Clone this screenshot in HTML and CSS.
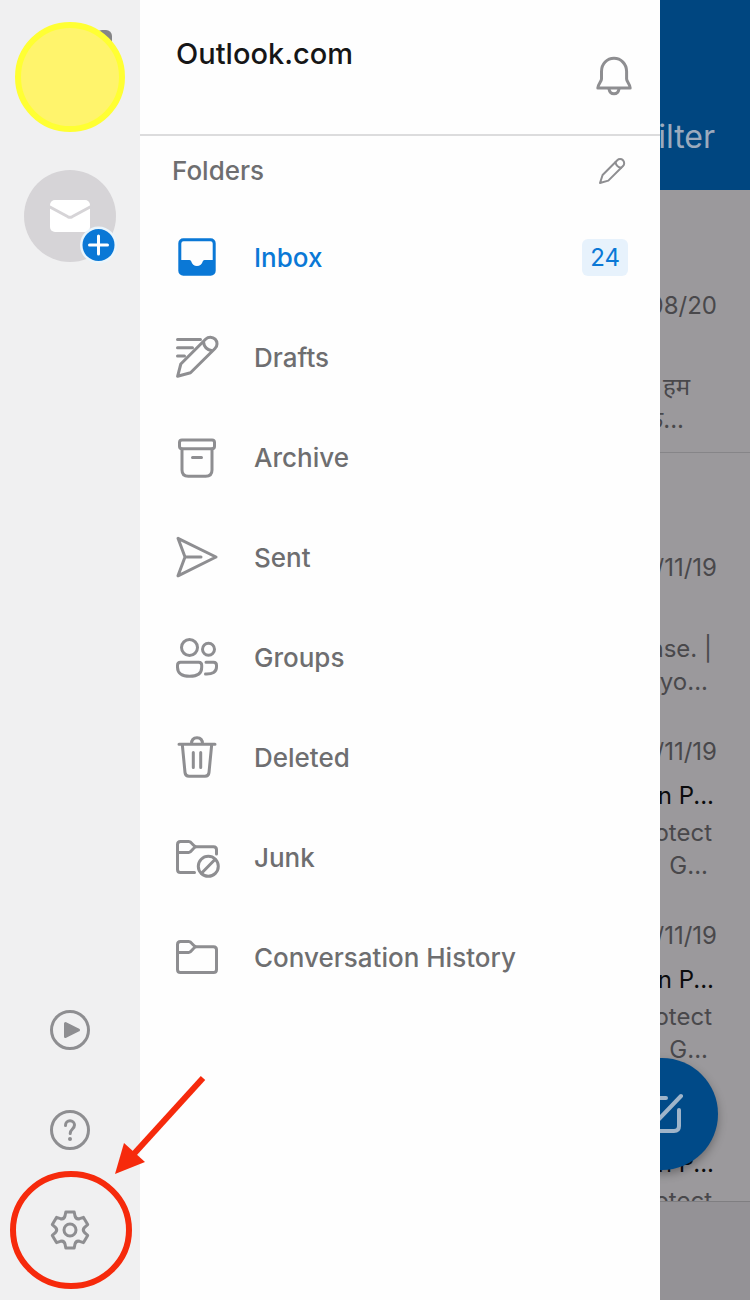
FILE: index.html
```html
<!DOCTYPE html>
<html lang="en">
<head>
    <meta charset="UTF-8">
    <meta name="viewport" content="width=device-width, initial-scale=1.0">
    <title>Outlook</title>
    <link rel="stylesheet" href="styles.css">
</head>
<body>

    <div class="app">
        <!-- Accounts rail -->
        <div class="rail">
            <button class="account" aria-label="Account">
                <span class="account-badge"></span>
                <span class="account-photo"></span>
            </button>
            <button class="add-account" aria-label="Add account">
                <svg width="92" height="92" viewBox="0 0 92 92">
                    <circle cx="46" cy="46" r="46" fill="#d6d4d7"/>
                    <rect x="26" y="30" width="40" height="32" rx="5" fill="#fff"/>
                    <path d="M25 36.5L44 46.8q2 1 4 0L67 36.5" fill="none" stroke="#d6d4d7" stroke-width="3"/>
                    <circle cx="74.5" cy="75" r="18.5" fill="#eaf5fc"/>
                    <circle cx="74.5" cy="75" r="16" fill="#0a78d6"/>
                    <path d="M74.5 66v18M65.5 75h18" stroke="#fff" stroke-width="3" stroke-linecap="round"/>
                </svg>
            </button>

            <div class="rail-tools">
                <button aria-label="Play my emails">
                    <svg width="40" height="40" viewBox="0 0 40 40">
                        <circle cx="20" cy="20" r="18.5"/>
                        <path d="M15.5 13.5L28.5 20l-13 6.5z" fill="#8e8e91"/>
                    </svg>
                </button>
                <button aria-label="Help">
                    <svg width="40" height="40" viewBox="0 0 40 40">
                        <circle cx="20" cy="20" r="18.5"/>
                        <path d="M15.5 15.5c0-3 2-4.700 4.500-4.700s4.500 1.800 4.500 4.300c0 3.900-4.300 4-4.300 8.400"/>
                        <circle cx="20" cy="29" r="2" fill="#8e8e91" stroke="none"/>
                    </svg>
                </button>
                <button aria-label="Settings">
                    <svg width="40" height="40" viewBox="0 0 40 40">
                        <path d="M15.8 2h8.4l.8 4Q26 9.6 29.6 8.7L33.5 7.4 37.7 14.6 34.6 17.3Q32 20 34.6 22.7L37.7 25.4 33.5 32.6 29.6 31.3Q26 30.4 25 34L24.2 38H15.8L15 34Q14 30.4 10.4 31.3L6.5 32.6 2.3 25.4 5.4 22.7Q8 20 5.4 17.3L2.3 14.6 6.5 7.4 10.4 8.7Q14 9.6 15 6z"/>
                        <circle cx="20" cy="20" r="6"/>
                    </svg>
                </button>
            </div>
        </div>

        <!-- Folder drawer -->
        <div class="drawer">
            <div class="drawer-header">
                <h1>Outlook.com</h1>
                <button aria-label="Notifications">
                    <svg width="40" height="40" viewBox="0 0 40 40">
                        <path d="M7.5 15.5C7.5 8 13 2.3 20 2.3S32.600 8 32.600 15.5V23c0 2.500 3.600 5.500 3.600 9H3.800c0-3.500 3.700-6.500 3.700-9z"/>
                        <path d="M15 33c.5 3 2.400 4.800 5 4.800s4.500-1.800 5-4.800"/>
                    </svg>
                </button>
            </div>

            <div class="folders-heading">
                <h2>Folders</h2>
                <button aria-label="Edit folders">
                    <svg width="28" height="28" viewBox="0 0 28 28">
                        <path d="M2 26L4.6 18 19.3 3.3a4 4 0 0 1 5.700 5.700L10.300 23.600z"/>
                        <path d="M17.500 5.200C18 8.500 20 10.300 23 10.800"/>
                    </svg>
                </button>
            </div>

            <nav>
                <a class="folder active" href="#inbox">
                    <svg width="46" height="46" viewBox="0 0 46 46">
                        <path d="M9.3 4.300h27.400a5 5 0 0 1 5 5v27.400a5 5 0 0 1-5 5H9.300a5 5 0 0 1-5-5V9.300a5 5 0 0 1 5-5zM9.500 7.300Q7.300 7.300 7.300 9.500V26H15.500q1.500 0 1.800 1.500c.6 2.700 2.800 4.500 5.700 4.500s5.100-1.800 5.700-4.500q.3-1.500 1.800-1.500h8.200V9.500q0-2.200-2.200-2.200z" fill="#0a78d6" fill-rule="evenodd" stroke="none"/>
                    </svg>
                    <span class="name">Inbox</span>
                    <span class="count">24</span>
                </a>
                <a class="folder" href="#drafts">
                    <svg width="46" height="46" viewBox="0 0 46 46">
                        <path d="M3.500 5.500h23M3.500 13.800h15M3.500 22h7"/>
                        <path d="M3.600 42.300L6.800 30 31.800 5a6.500 6.500 0 0 1 9.200 9.500L16.500 38.800zM29.500 8c.5 4.700 3.500 7.800 8.500 8.800"/>
                    </svg>
                    <span class="name">Drafts</span>
                </a>
                <a class="folder" href="#archive">
                    <svg width="46" height="46" viewBox="0 0 46 46">
                        <rect x="5.500" y="6" width="35" height="8.700" rx="2.500"/>
                        <path d="M8 15v21q0 6.300 6.300 6.300h17.400q6.300 0 6.300-6.300V15M18.500 23.500h9"/>
                    </svg>
                    <span class="name">Archive</span>
                </a>
                <a class="folder" href="#sent">
                    <svg width="46" height="46" viewBox="0 0 46 46">
                        <path d="M4 4.300L42 23 4 41.800 11 23zM11 23h16"/>
                    </svg>
                    <span class="name">Sent</span>
                </a>
                <a class="folder" href="#groups">
                    <svg width="46" height="46" viewBox="0 0 46 46">
                        <circle cx="15.500" cy="13.500" r="8"/>
                        <circle cx="34.500" cy="15.300" r="6"/>
                        <path d="M6.500 28.300h18.200q3 0 3 3v1.900c0 6-4.500 9.100-12.100 9.100S3.500 39.200 3.500 33.200v-1.900q0-3 3-3zM32 28.300h7.500q3 0 3 3V33c0 5-4 7.300-11 7"/>
                    </svg>
                    <span class="name">Groups</span>
                </a>
                <a class="folder" href="#deleted">
                    <svg width="46" height="46" viewBox="0 0 46 46">
                        <path d="M5 10.200h36M17.500 10c0-4 2-6.200 5.500-6.200s5.500 2.200 5.500 6.200M8.300 10.500L11 38.500q.4 3.800 4 3.800h16q3.600 0 4-3.800l2.700-28M19.300 18.500v15M26.700 18.500v15"/>
                    </svg>
                    <span class="name">Deleted</span>
                </a>
                <a class="folder" href="#junk">
                    <svg width="46" height="46" viewBox="0 0 46 46">
                        <path d="M20.500 38.500H6.500q-3 0-3-3v-25q0-3 3-3h8.300c3.500 0 3.900 5.300 7.700 5.300h17q3 0 3 3V20M3.500 18.500h11.300c3.500 0 3.900-5.700 7.700-5.700"/>
                        <circle cx="34.300" cy="32.300" r="10"/>
                        <path d="M27.500 39.300l13.700-14"/>
                    </svg>
                    <span class="name">Junk</span>
                </a>
                <a class="folder" href="#history">
                    <svg width="46" height="46" viewBox="0 0 46 46">
                        <path d="M39.500 38.500h-33q-3 0-3-3v-25q0-3 3-3h8.300c3.500 0 3.900 5.300 7.700 5.300h17q3 0 3 3v19.700q0 3-3 3zM3.500 18.500h11.300c3.500 0 3.900-5.700 7.700-5.700"/>
                    </svg>
                    <span class="name">Conversation History</span>
                </a>
            </nav>
        </div>

        <!-- Dimmed message list behind the drawer -->
        <div class="inbox">
            <div class="inbox-header">Filter</div>
            <div class="messages">
                <div class="day">
                    <div class="message">
                        <div class="date">08/20</div>
                        <div class="subject"></div>
                        <div class="preview hindi">हम</div>
                        <div class="preview hindi last">क...</div>
                    </div>
                </div>
                <div class="day">
                    <div class="message">
                        <div class="date">/11/19</div>
                        <div class="subject"></div>
                        <div class="preview">ase. |</div>
                        <div class="preview last">yo...</div>
                    </div>
                    <div class="message">
                        <div class="date">/11/19</div>
                        <div class="subject">n P...</div>
                        <div class="preview">otect</div>
                        <div class="preview last">G...</div>
                    </div>
                    <div class="message">
                        <div class="date">/11/19</div>
                        <div class="subject">n P...</div>
                        <div class="preview">otect</div>
                        <div class="preview last">G...</div>
                    </div>
                    <div class="message">
                        <div class="date"></div>
                        <div class="subject">n P...</div>
                        <div class="preview">otect</div>
                    </div>
                </div>
            </div>
            <div class="tab-bar"></div>
            <button class="compose" aria-label="New message">
                <svg width="56" height="56" viewBox="0 0 56 56">
                    <path d="M32 12H14q-4 0-4 4v25q0 4 4 4h26q5 0 5-5V24M47 10L25 33"/>
                </svg>
            </button>
        </div>

        <!-- Red pointer to the settings button -->
        <svg class="pointer" width="220" height="240" viewBox="0 0 220 240">
            <ellipse cx="71" cy="170" rx="58" ry="56"/>
            <path d="M203 18L132 96"/>
            <path class="pointer-head" d="M115 114L124 83l21 19z"/>
        </svg>
    </div>

</body>
</html>
```
FILE: styles.css
```css
* {
    box-sizing: border-box;
}

body {
    font-family: Inter, "Noto Sans", sans-serif;
    margin: 0;
    color: #6e6e70;
}

h1, h2 {
    margin: 0;
}

button {
    display: block;
    padding: 0;
    border: none;
    background: none;
    cursor: pointer;
}

svg {
    display: block;
    flex: none;
    overflow: visible;
    fill: none;
    stroke: #8e8e91;
    stroke-width: 3;
    stroke-linecap: round;
    stroke-linejoin: round;
}

.app {
    position: relative;
    display: flex;
    height: 100vh;
    overflow: hidden;
}

/* Accounts rail */
.rail {
    display: flex;
    flex-direction: column;
    align-items: center;
    gap: 38px;
    width: 140px;
    padding: 22px 0 20px;
    background-color: #f0f0f1;
}

.account {
    position: relative;
    width: 110px;
    height: 110px;
}

.account-badge {
    position: absolute;
    top: 8px;
    right: 13px;
    width: 16px;
    height: 16px;
    border-radius: 6px;
    background-color: #858587;
}

.account-photo {
    position: relative;
    display: block;
    height: 100%;
    border: 6px solid #ffff33;
    border-radius: 50%;
    background-color: #fff46c;
}

.add-account svg {
    stroke: none;
}

.rail-tools {
    margin-top: auto;
}

.rail-tools button {
    display: flex;
    align-items: center;
    height: 100px;
}

/* Folder drawer */
.drawer {
    flex: 1;
    min-width: 0;
    background-color: #fefefe;
}

.drawer-header {
    display: flex;
    justify-content: space-between;
    padding: 36px 26px 38px 36px;
    border-bottom: 2px solid #dcdcdd;
}

.drawer-header h1 {
    color: #161617;
    font-size: 29px;
    font-weight: 500;
    line-height: 36px;
}

.drawer-header button {
    padding-top: 20px;
}

.folders-heading {
    display: flex;
    align-items: center;
    justify-content: space-between;
    height: 71px;
    padding: 0 34px 2px 32px;
}

.folders-heading h2 {
    font-size: 26px;
    font-weight: 500;
}

.folders-heading svg {
    stroke-width: 2;
}

.folder {
    display: flex;
    align-items: center;
    gap: 34px;
    height: 100px;
    padding: 0 32px 0 34px;
    color: #6e6e70;
    font-size: 26px;
    font-weight: 500;
    text-decoration: none;
}

.folder .name {
    flex: 1;
}

.folder.active {
    color: #0a78d6;
}

.count {
    padding: 0 8px;
    border-radius: 6px;
    background-color: #e7f2fc;
    font-size: 24px;
    font-weight: 400;
    line-height: 37px;
}

/* Message list */
.inbox {
    position: relative;
    display: flex;
    flex-direction: column;
    width: 90px;
    overflow: hidden;
    background-color: #9b999c;
    color: #49484b;
    font-size: 24px;
    line-height: 33px;
    white-space: nowrap;
}

.inbox-header {
    display: flex;
    align-items: flex-end;
    justify-content: flex-end;
    height: 190px;
    padding: 0 35px 33px 0;
    background-color: #004680;
    color: #9baabd;
    font-size: 32px;
    line-height: 40px;
}

.messages {
    flex: 1;
    min-height: 0;
    overflow: hidden;
}

.day {
    padding-top: 78px;
    border-bottom: 1px solid #868588;
}

.day + .day {
    padding-top: 77px;
}

.message {
    display: flex;
    flex-direction: column;
    align-items: flex-end;
    height: 184px;
    padding: 21px 33px 16px 0;
}

.subject {
    height: 33px;
    margin: 11px 3px 4px 0;
    color: #0c0c0d;
}

.date {
    height: 33px;
}

.preview {
    padding-right: 5px;
}

.preview.last {
    padding-right: 9px;
}

.preview.hindi {
    padding-right: 27px;
}

.preview.hindi.last {
    padding-right: 33px;
}

.tab-bar {
    height: 99px;
    border-top: 1px solid #7f7e81;
    background-color: #949296;
}

.compose {
    position: absolute;
    right: 32px;
    bottom: 130px;
    display: flex;
    align-items: center;
    justify-content: center;
    width: 112px;
    height: 112px;
    border-radius: 50%;
    background-color: #004a88;
    box-shadow: 0 4px 10px rgba(0, 0, 0, 0.3);
}

.compose svg {
    stroke: #9fb4c9;
    stroke-width: 4;
}

/* Pointer */
.pointer {
    position: absolute;
    left: 0;
    bottom: 0;
    stroke: #f62a0c;
    stroke-width: 6;
    stroke-linecap: butt;
    pointer-events: none;
}

.pointer-head {
    fill: #f62a0c;
    stroke: none;
}
```
